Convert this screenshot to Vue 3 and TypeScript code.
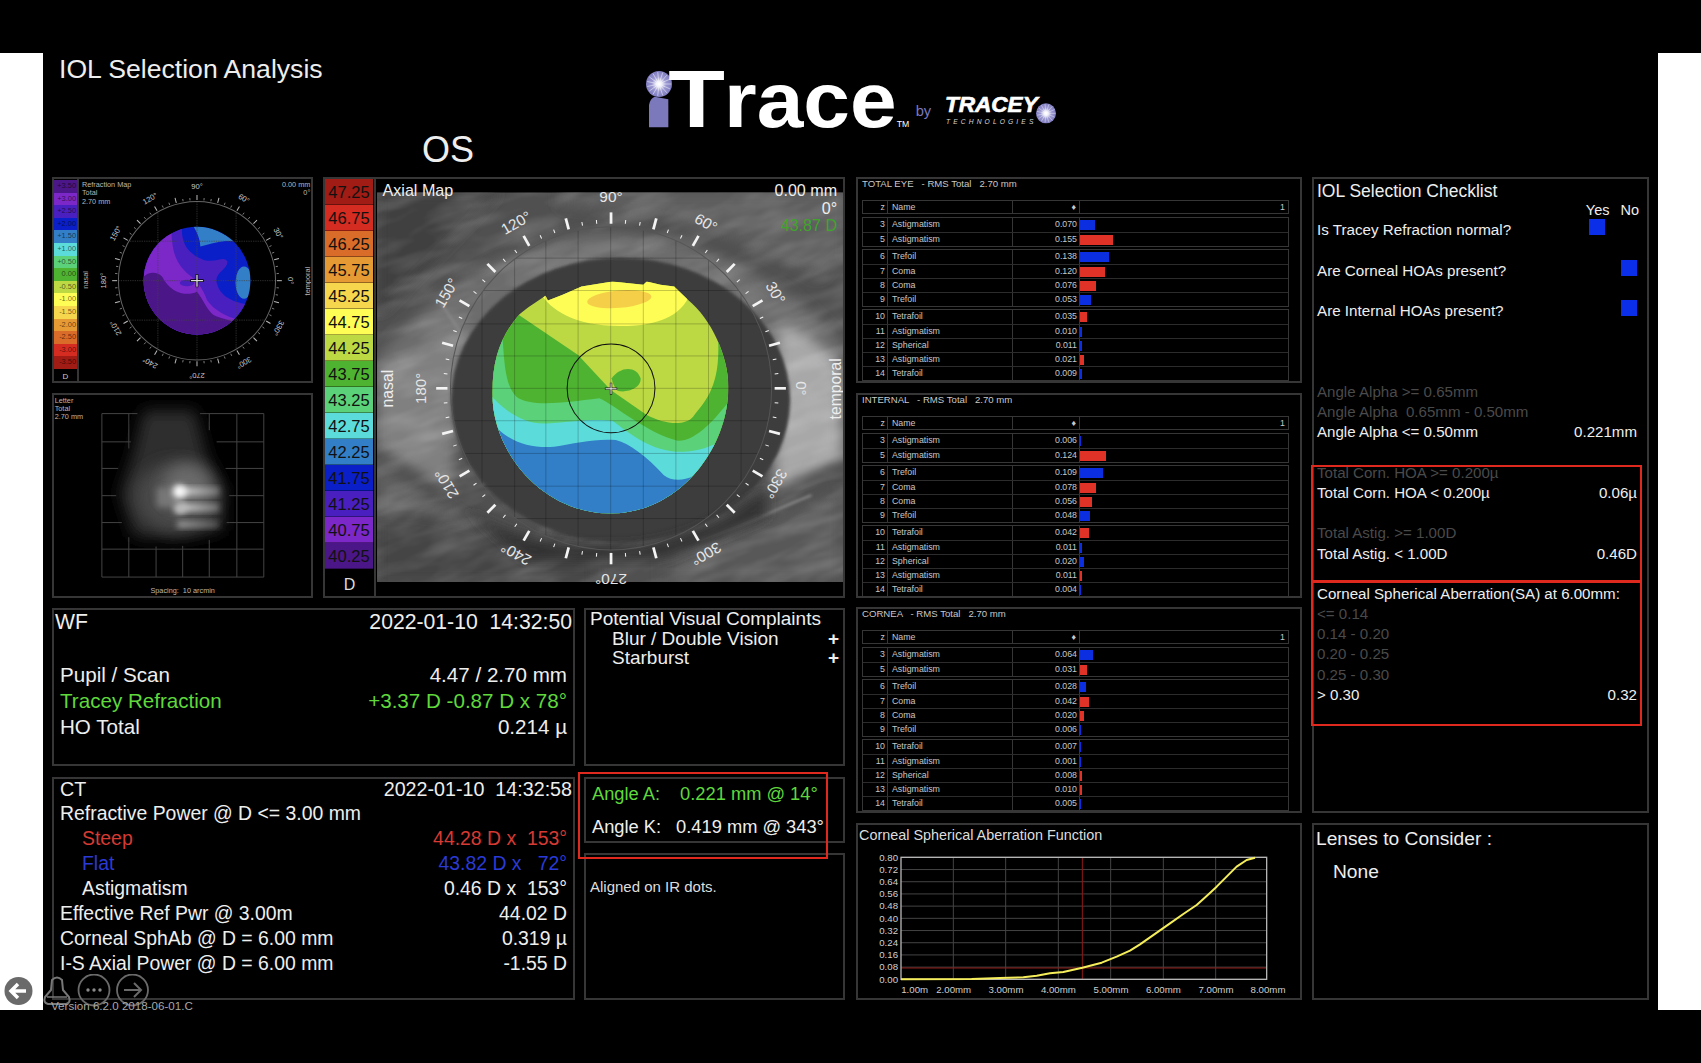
<script setup lang="ts">
interface Term {
  z: number
  name: string
  value: string
  color: 'blue' | 'red'
}

interface AberrationTable {
  title: string
  groups: Term[][]
}

const toTerms = (rows: [number, string, string, 'blue' | 'red'][]): Term[] =>
  rows.map(([z, name, value, color]) => ({ z, name, value, color }))

const buildGroups = (values: [string, 'blue' | 'red'][]): Term[][] => {
  const names: [number, string][] = [
    [3, 'Astigmatism'], [5, 'Astigmatism'], [6, 'Trefoil'], [7, 'Coma'], [8, 'Coma'], [9, 'Trefoil'],
    [10, 'Tetrafoil'], [11, 'Astigmatism'], [12, 'Spherical'], [13, 'Astigmatism'], [14, 'Tetrafoil'],
  ]
  const rows = toTerms(names.map(([z, name], i) => [z, name, values[i][0], values[i][1]]))
  return [rows.slice(0, 2), rows.slice(2, 6), rows.slice(6)]
}

const tables: AberrationTable[] = [
  {
    title: 'TOTAL EYE   - RMS Total   2.70 mm',
    groups: buildGroups([
      ['0.070', 'blue'], ['0.155', 'red'], ['0.138', 'blue'], ['0.120', 'red'], ['0.076', 'red'], ['0.053', 'blue'],
      ['0.035', 'red'], ['0.010', 'blue'], ['0.011', 'blue'], ['0.021', 'red'], ['0.009', 'blue'],
    ]),
  },
  {
    title: 'INTERNAL   - RMS Total   2.70 mm',
    groups: buildGroups([
      ['0.006', 'blue'], ['0.124', 'red'], ['0.109', 'blue'], ['0.078', 'red'], ['0.056', 'red'], ['0.048', 'blue'],
      ['0.042', 'red'], ['0.011', 'blue'], ['0.020', 'blue'], ['0.011', 'red'], ['0.004', 'blue'],
    ]),
  },
  {
    title: 'CORNEA   - RMS Total   2.70 mm',
    groups: buildGroups([
      ['0.064', 'blue'], ['0.031', 'red'], ['0.028', 'blue'], ['0.042', 'red'], ['0.020', 'red'], ['0.006', 'blue'],
      ['0.007', 'blue'], ['0.001', 'blue'], ['0.008', 'red'], ['0.010', 'red'], ['0.005', 'blue'],
    ]),
  },
]

const barWidth = (value: string) => `${Math.max(parseFloat(value) * 210, 1)}px`

const scale = ['#a01c14', '#d42c20', '#d96c28', '#e59a34', '#f6d64c', '#fdfd56', '#bcd944', '#4fb332',
  '#5bd27a', '#5cdbdb', '#327fc7', '#0a1fc8', '#4a1fc0', '#7c27c8', '#4b1687']

const axialLegend = ['47.25', '46.75', '46.25', '45.75', '45.25', '44.75', '44.25', '43.75',
  '43.25', '42.75', '42.25', '41.75', '41.25', '40.75', '40.25']
  .map((label, i) => ({ label, color: scale[i] }))

const refractionLegend = ['+3.50', '+3.00', '+2.50', '+2.00', '+1.50', '+1.00', '+0.50', '0.00',
  '-0.50', '-1.00', '-1.50', '-2.00', '-2.50', '-3.00', '-3.50']
  .map((label, i) => ({ label, color: scale[14 - i] }))

// ticks and degree labels round a polar map, xs squeezes x for the stretched views
const polar = (cx: number, cy: number, xs: number, major: [number, number], minor: [number, number], labelR: number) => {
  const pt = (deg: number, r: number) => {
    const rad = (deg * Math.PI) / 180
    return { x: cx + r * xs * Math.cos(rad), y: cy - r * Math.sin(rad) }
  }
  const ticks = []
  for (let a = 0; a < 360; a += 5) {
    const isMajor = a % 15 === 0
    const [r1, r2] = isMajor ? major : minor
    const p1 = pt(a, r1)
    const p2 = pt(a, r2)
    ticks.push({ a, isMajor, x1: p1.x, y1: p1.y, x2: p2.x, y2: p2.y })
  }
  const labels = []
  for (let a = 0; a < 360; a += 30) {
    const p = pt(a, labelR)
    labels.push({ a, x: p.x, y: p.y, rot: 90 - a })
  }
  return { ticks, labels }
}

const eyePolar = polar(846, 655, 0.967, [493, 527], [495, 506], 573)
const refrPolar = polar(590, 722, 1, [241, 256], [241, 248], 283)

const eyeGridX = [280, 375, 470, 565, 656, 750, 845, 940, 1035, 1130, 1225, 1320]
const eyeGridY = [170, 265, 362, 462, 558, 655, 752, 850, 948, 1045, 1140]

const psfLines = [
  'M305 100H412', 'M600 100H792', 'M305 185H392', 'M650 185H792', 'M305 265H354', 'M677 265H792',
  'M305 347H348', 'M688 347H792', 'M305 428H365', 'M680 428H792', 'M305 508H792', 'M305 592H792',
  'M305 100V592', 'M792 100V592', 'M386 100V205', 'M386 472V592', 'M468 500V592', 'M548 498V592',
  'M628 100V150', 'M628 480V592', 'M711 100V592',
]

const chartGridX = [310, 467, 625, 782, 940, 1097]
const chartY = ['0.80', '0.72', '0.64', '0.56', '0.48', '0.40', '0.32', '0.24', '0.16', '0.08', '0.00']
  .map((label, i) => ({ label, y: 142 + i * 36.6 }))
const chartX = [
  { label: '1.00m', x: 194 }, { label: '2.00mm', x: 311 }, { label: '3.00mm', x: 468 }, { label: '4.00mm', x: 625 },
  { label: '5.00mm', x: 783 }, { label: '6.00mm', x: 940 }, { label: '7.00mm', x: 1098 }, { label: '8.00mm', x: 1254 },
]
const curve = '153,508 365,507 450,504 520,502 560,497 600,490 640,486 697,473 755,458 800,440 840,422 870,403 900,382 960,340 1000,312 1040,285 1070,258 1100,230 1130,200 1160,170 1190,150 1215,143'

const rays = (cx: number, cy: number, r: number) => {
  const out = []
  for (let a = 0; a < 360; a += 24) {
    const rad = (a * Math.PI) / 180
    out.push({ x: cx + r * Math.cos(rad), y: cy + r * Math.sin(rad) })
  }
  return out
}
const bigSun = rays(117, 102, 36)
const smallSun = rays(1278, 190, 28)

const wfDate = '2022-01-10  14:32:50'
const ctDate = '2022-01-10  14:32:58'

const wfRows = [
  { label: 'Pupil / Scan', value: '4.47 / 2.70 mm', cls: '' },
  { label: 'Tracey Refraction', value: '+3.37 D -0.87 D x 78°', cls: 'green' },
  { label: 'HO Total', value: '0.214 µ', cls: '' },
]

const ctRows = [
  { label: 'Refractive Power @ D <= 3.00 mm', value: '', cls: '' },
  { label: 'Steep', value: '44.28 D x  153°', cls: 'red indent' },
  { label: 'Flat', value: '43.82 D x   72°', cls: 'blue indent' },
  { label: 'Astigmatism', value: '0.46 D x  153°', cls: 'indent' },
  { label: 'Effective Ref Pwr @ 3.00m', value: '44.02 D', cls: '' },
  { label: 'Corneal SphAb @ D = 6.00 mm', value: '0.319 µ', cls: '' },
  { label: 'I-S Axial Power @ D = 6.00 mm', value: '-1.55 D', cls: '' },
]

const checks = [
  { label: 'Is Tracey Refraction normal?', yes: true },
  { label: 'Are Corneal HOAs present?', yes: false },
  { label: 'Are Internal HOAs present?', yes: false },
]

const criteria = [
  { text: 'Angle Alpha >= 0.65mm', value: '', dim: true },
  { text: 'Angle Alpha  0.65mm - 0.50mm', value: '', dim: true },
  { text: 'Angle Alpha <= 0.50mm', value: '0.221mm', dim: false },
  { text: '', value: '', dim: false },
  { text: 'Total Corn. HOA >= 0.200µ', value: '', dim: true },
  { text: 'Total Corn. HOA < 0.200µ', value: '0.06µ', dim: false },
  { text: '', value: '', dim: false },
  { text: 'Total Astig. >= 1.00D', value: '', dim: true },
  { text: 'Total Astig. < 1.00D', value: '0.46D', dim: false },
  { text: '', value: '', dim: false },
  { text: 'Corneal Spherical Aberration(SA) at 6.00mm:', value: '', dim: false },
  { text: '<= 0.14', value: '', dim: true },
  { text: '0.14 - 0.20', value: '', dim: true },
  { text: '0.20 - 0.25', value: '', dim: true },
  { text: '0.25 - 0.30', value: '', dim: true },
  { text: '> 0.30', value: '0.32', dim: false },
]
</script>

<template>
  <div class="page">
    <div class="stage">
      <div class="side"></div>
      <main class="screen">
        <header class="top">
          <div class="heading">
            <h1 class="title">IOL Selection Analysis</h1>
            <div class="eye-side">OS</div>
          </div>
          <!-- iTrace / Tracey logo -->
          <svg class="logo" viewBox="0 0 1380 330">
            <defs>
              <radialGradient id="sun">
                <stop offset="0" stop-color="#fff" />
                <stop offset="0.22" stop-color="#e8e8f8" />
                <stop offset="0.55" stop-color="#9a97d0" />
                <stop offset="1" stop-color="#7f7cc0" />
              </radialGradient>
            </defs>
            <path d="M87 232V165Q90 146 104 140L145 148V232Z" fill="#7b78bb" />
            <circle cx="117" cy="102" r="39" fill="url(#sun)" />
            <line v-for="(r, i) in bigSun" :key="i" x1="117" y1="102" :x2="r.x" :y2="r.y" stroke="#fff" stroke-width="1.5" />
            <text class="logo-word" x="145" y="232" font-size="243" textLength="170" lengthAdjust="spacingAndGlyphs">T</text>
            <text class="logo-word" x="312" y="232" font-size="231" textLength="518" lengthAdjust="spacingAndGlyphs">race</text>
            <text class="logo-small" x="830" y="232" font-size="26" fill="#fff">TM</text>
            <text class="logo-small" x="887" y="197" font-size="44" fill="#7b78bb">by</text>
            <text class="logo-tracey" x="975" y="186" font-size="64" textLength="278" lengthAdjust="spacingAndGlyphs">TRACEY</text>
            <text class="logo-tech" x="978" y="222" font-size="20" textLength="262" lengthAdjust="spacing">TECHNOLOGIES</text>
            <circle cx="1278" cy="190" r="30" fill="url(#sun)" />
            <line v-for="(r, i) in smallSun" :key="'s' + i" x1="1278" y1="190" :x2="r.x" :y2="r.y" stroke="#fff" stroke-width="1.2" />
          </svg>
        </header>

        <div class="board">
          <div class="left-block">
            <div class="maps">
              <div class="small-col">
                <section class="panel refr">
                  <div class="mini-legend">
                    <div v-for="c in refractionLegend" :key="c.label" class="mini-cell" :style="{ background: c.color }">{{ c.label }}</div>
                    <div class="mini-unit">D</div>
                  </div>
                  <svg class="fill-svg" viewBox="234 418 700 604" preserveAspectRatio="none">
                    <defs>
                      <clipPath id="refr-zone"><circle cx="590" cy="722" r="161" /></clipPath>
                      <clipPath id="refr-outer"><circle cx="590" cy="722" r="237" /></clipPath>
                    </defs>
                    <g clip-path="url(#refr-zone)">
                      <rect x="420" y="550" width="340" height="340" fill="#0a1fc8" />
                      <path d="M578 558C620 558 670 575 705 605C670 600 640 610 600 620C600 600 590 575 578 558Z" fill="#327fc7" />
                      <ellipse cx="732" cy="728" rx="26" ry="48" fill="#327fc7" />
                      <path d="M420 722V550H545C540 610 560 640 610 660C650 670 670 645 682 665C682 690 640 700 650 730C660 770 700 790 760 795V890H420Z" fill="#4a1fc0" />
                      <path d="M420 722V560H512C515 630 520 660 560 700C590 720 610 750 620 780C640 810 680 830 712 838V890H420Z" fill="#7c27c8" />
                      <ellipse cx="560" cy="729" rx="22" ry="10" fill="#4a1fc0" />
                      <path d="M420 722C440 690 470 695 485 710C510 760 560 770 590 755C610 780 620 810 640 825C660 835 690 840 705 848V890H420Z" fill="#4b1687" />
                    </g>
                    <g clip-path="url(#refr-outer)" stroke="#444" stroke-width="2" stroke-dasharray="4 3">
                      <path d="M353 604H827M353 722H827M353 840H827M472 485V959M590 485V959M708 485V959" />
                    </g>
                    <circle cx="590" cy="722" r="237" fill="none" stroke="#666" stroke-width="3" />
                    <line v-for="t in refrPolar.ticks" :key="t.a" :x1="t.x1" :y1="t.y1" :x2="t.x2" :y2="t.y2" stroke="#bbb" :stroke-width="t.isMajor ? 3 : 2" />
                    <text v-for="l in refrPolar.labels" :key="l.a" class="refr-label" :x="l.x" :y="l.y" :transform="`rotate(${l.rot} ${l.x} ${l.y})`">{{ l.a }}°</text>
                    <path d="M590 702V742M570 722H610" stroke="#000" stroke-width="8" />
                    <path d="M590 704V740M572 722H608" stroke="#ddd" stroke-width="4" />
                    <text class="refr-text" x="243" y="442">Refraction Map</text>
                    <text class="refr-text" x="243" y="467">Total</text>
                    <text class="refr-text" x="243" y="492">2.70 mm</text>
                    <text class="refr-text end" x="932" y="442">0.00 mm</text>
                    <text class="refr-text end" x="932" y="467">0°</text>
                    <text class="refr-text" transform="rotate(-90 262 746)" x="262" y="746">nasal</text>
                    <text class="refr-text" transform="rotate(-90 930 766)" x="930" y="766">temporal</text>
                  </svg>
                </section>
                <section class="panel psf">
                  <svg class="fill-svg" viewBox="161 44 773 605" preserveAspectRatio="none">
                    <defs>
                      <filter id="soft-a" x="-40%" y="-40%" width="180%" height="180%"><feGaussianBlur stdDeviation="22" /></filter>
                      <filter id="soft-b" x="-40%" y="-40%" width="180%" height="180%"><feGaussianBlur stdDeviation="9" /></filter>
                      <linearGradient id="streak">
                        <stop offset="0" stop-color="#e4e4e4" />
                        <stop offset="1" stop-color="#777" />
                      </linearGradient>
                    </defs>
                    <path v-for="l in psfLines" :key="l" :d="l" stroke="#444" stroke-width="3" fill="none" />
                    <path d="M430 90H585L620 230L670 320L670 450L540 475L400 470L360 340L400 220Z" fill="#2e2e2e" filter="url(#soft-a)" />
                    <ellipse cx="530" cy="350" rx="125" ry="105" fill="#4a4a4a" filter="url(#soft-a)" />
                    <ellipse cx="560" cy="320" rx="70" ry="70" fill="#6a6a6a" filter="url(#soft-a)" />
                    <rect x="532" y="322" width="125" height="24" fill="url(#streak)" filter="url(#soft-b)" />
                    <rect x="532" y="372" width="125" height="22" fill="url(#streak)" filter="url(#soft-b)" />
                    <rect x="532" y="424" width="125" height="20" fill="url(#streak)" opacity="0.6" filter="url(#soft-b)" />
                    <rect x="470" y="322" width="70" height="60" fill="#777" filter="url(#soft-b)" />
                    <ellipse cx="538" cy="335" rx="20" ry="20" fill="#fff" filter="url(#soft-b)" />
                    <ellipse cx="540" cy="385" rx="18" ry="18" fill="#bbb" filter="url(#soft-b)" />
                    <text class="refr-text" x="163" y="67">Letter</text>
                    <text class="refr-text" x="163" y="92">Total</text>
                    <text class="refr-text" x="163" y="117">2.70 mm</text>
                    <text class="refr-text mid" x="548" y="641">Spacing:&#160; 10 arcmin</text>
                  </svg>
                </section>
              </div>

              <section class="panel axial">
                <div class="axial-legend">
                  <div v-for="c in axialLegend" :key="c.label" class="axial-cell" :style="{ background: c.color }">{{ c.label }}</div>
                  <div class="axial-unit">D</div>
                </div>
                <svg class="fill-svg" viewBox="161 28 1361 1249" preserveAspectRatio="none">
                  <defs>
                    <filter id="skin" x="-10%" y="-10%" width="120%" height="120%"><feGaussianBlur stdDeviation="18" /></filter>
                    <filter id="skin-fine" x="-10%" y="-10%" width="120%" height="120%"><feGaussianBlur stdDeviation="4" /></filter>
                    <filter id="grain" x="0" y="0" width="100%" height="100%">
                      <feTurbulence type="fractalNoise" baseFrequency="0.006 0.024" numOctaves="3" seed="4" />
                      <feColorMatrix values="0 0 0 0 1  0 0 0 0 1  0 0 0 0 1  2 0 0 0 -0.75" />
                      <feGaussianBlur stdDeviation="3" />
                    </filter>
                    <clipPath id="eye-photo"><rect x="164" y="68" width="1358" height="1167" /></clipPath>
                    <clipPath id="zone-map">
                      <path d="M580 432L605 412L655 378L662 392L705 375L760 350L850 335L940 345L950 335L990 345L1030 350L1070 390C1140 450 1188 560 1188 650C1188 840 1040 1030 844 1030C650 1030 500 850 500 670C500 560 530 490 580 432Z" />
                    </clipPath>
                    <clipPath id="eye-circle"><ellipse cx="846" cy="655" rx="468" ry="484" /></clipPath>
                  </defs>
                  <g clip-path="url(#eye-photo)">
                    <rect x="164" y="68" width="1358" height="1167" fill="#505050" />
                    <g filter="url(#skin)">
                      <path d="M164 68H520L300 300L164 440Z" fill="#404040" />
                      <path d="M164 560C300 400 480 240 780 190C1050 170 1350 320 1522 520V600L164 700Z" fill="#6c6c6c" />
                      <path d="M700 110C900 120 1200 170 1450 330L1522 250V68H700Z" fill="#5e5e5e" />
                      <path d="M164 590C240 560 320 520 420 480L380 960L164 830Z" fill="#808080" />
                      <path d="M1340 470C1420 500 1522 560 1522 640V860L1320 950Z" fill="#a8a8a8" />
                      <path d="M164 880C300 980 420 1060 600 1120V1235H164Z" fill="#606060" />
                      <path d="M164 1040C300 1000 500 1100 800 1160V1235H164Z" fill="#454545" />
                      <path d="M1000 1140C1200 1100 1350 1010 1522 960V1235H1000Z" fill="#585858" />
                    </g>
                    <rect x="-200" y="-300" width="2100" height="1900" filter="url(#grain)" opacity="0.16" transform="rotate(-18 800 600)" />
                    <g filter="url(#skin-fine)" fill="none" stroke="#8c8c8c" stroke-width="5">
                      <path d="M1100 1110C1230 1070 1340 1010 1430 975" stroke="#a0a0a0" />
                      <path d="M350 400C370 430 390 460 410 490" />
                    </g>
                    <ellipse cx="874" cy="690" rx="494" ry="426" fill="#3e3e3e" filter="url(#skin-fine)" />
                    <path d="M380 980C540 1120 720 1135 900 1125C1050 1115 1200 1040 1300 950V1040L1000 1170L600 1170Z" fill="#333" filter="url(#skin)" />
                  </g>
                  <!-- height map, painted back to front -->
                  <g clip-path="url(#zone-map)">
                    <rect x="490" y="325" width="710" height="715" fill="#bcd944" />
                    <path d="M640 370C670 420 740 470 880 468C960 468 1040 450 1072 382L1060 330H640Z" fill="#fdfd56" />
                    <ellipse cx="870" cy="388" rx="94" ry="26" transform="rotate(-5 870 388)" fill="#f6cf48" />
                    <path d="M570 430L750 555L845 660L950 735C1000 762 1060 770 1085 740C1120 695 1165 650 1158 510L1205 510V1040H490V430Z" fill="#4fb332" />
                    <path d="M490 500L530 505C535 590 540 650 570 680C610 710 700 700 812 685C850 700 950 790 1040 812C1100 816 1170 720 1200 680V1040H490Z" fill="#5bd27a" />
                    <path d="M490 670C540 730 600 765 660 760C730 755 800 745 850 752C900 790 970 850 1060 845C1100 842 1140 830 1165 812L1200 1040H490Z" fill="#5cdbdb" />
                    <path d="M490 745L515 775C560 820 620 835 680 830C740 820 800 805 860 810C900 820 950 860 1000 915C1030 940 1090 930 1122 890L1200 1040H490Z" fill="#327fc7" />
                    <path d="M848 625C870 590 920 585 932 625C935 655 890 670 865 662C855 650 850 640 848 625Z" fill="#4fb332" />
                  </g>
                  <g clip-path="url(#eye-circle)" stroke="#000" stroke-opacity="0.32" stroke-width="2">
                    <line v-for="x in eyeGridX" :key="'gx' + x" :x1="x" y1="160" :x2="x" y2="1150" />
                    <line v-for="y in eyeGridY" :key="'gy' + y" x1="370" :y1="y" x2="1320" :y2="y" />
                  </g>
                  <ellipse cx="846" cy="655" rx="468" ry="484" fill="none" stroke="#555" stroke-width="3" />
                  <ellipse cx="846" cy="655" rx="128" ry="133" fill="none" stroke="#111" stroke-width="3" />
                  <line v-for="t in eyePolar.ticks" :key="t.a" :x1="t.x1" :y1="t.y1" :x2="t.x2" :y2="t.y2" stroke="#f4f4f4" :stroke-width="t.isMajor ? 8 : 3" />
                  <path d="M846 638V674M828 656H864" stroke="#222" stroke-width="7" />
                  <path d="M846 640V672M830 656H862" stroke="#e8e8e8" stroke-width="3" />
                  <text v-for="l in eyePolar.labels" :key="l.a" class="eye-label" :x="l.x" :y="l.y" :transform="`rotate(${l.rot} ${l.x} ${l.y})`">{{ l.a }}°</text>
                  <text class="eye-text" x="180" y="79">Axial Map</text>
                  <text class="eye-text end" x="1505" y="79">0.00 mm</text>
                  <text class="eye-text end" x="1505" y="132">0°</text>
                  <text class="eye-text end dim-green" x="1505" y="184">43.87 D</text>
                  <text class="eye-text" transform="rotate(-90 210 712)" x="210" y="712">nasal</text>
                  <text class="eye-text" transform="rotate(-90 1515 748)" x="1515" y="748">temporal</text>
                </svg>
              </section>
            </div>

            <div class="readouts">
              <div class="readout-col">
                <section class="panel wf">
                  <div class="wf-head"><span class="wf-name">WF</span><span>{{ wfDate }}</span></div>
                  <div class="wf-rows">
                    <div v-for="r in wfRows" :key="r.label" class="row" :class="r.cls">
                      <span>{{ r.label }}</span><span>{{ r.value }}</span>
                    </div>
                  </div>
                </section>
                <section class="panel ct">
                  <div class="ct-head"><span class="ct-name">CT</span><span>{{ ctDate }}</span></div>
                  <div v-for="r in ctRows" :key="r.label" class="ct-row row" :class="r.cls">
                    <span class="ct-label">{{ r.label }}</span><span>{{ r.value }}</span>
                  </div>
                </section>
              </div>
              <div class="mid-col">
                <section class="panel complaints">
                  <div class="complaints-title">Potential Visual Complaints</div>
                  <div class="complaint"><span>Blur / Double Vision</span><span class="plus">+</span></div>
                  <div class="complaint"><span>Starburst</span><span class="plus">+</span></div>
                </section>
                <section class="panel angles">
                  <div class="angle green"><span class="angle-name">Angle A:</span><span class="angle-a">0.221 mm @ 14°</span></div>
                  <div class="angle"><span class="angle-name">Angle K:</span><span class="angle-k">0.419 mm @ 343°</span></div>
                </section>
                <section class="panel aligned">Aligned on IR dots.</section>
                <div class="red-box angle-box"></div>
              </div>
            </div>
          </div>

          <div class="aberr-col">
            <section v-for="t in tables" :key="t.title" class="panel aberr">
              <div class="aberr-title">{{ t.title }}</div>
              <div class="term-head term-row">
                <span class="c-z">z</span><span class="c-name">Name</span><span class="c-val diamond">♦</span><span class="c-bar head-one">1</span>
              </div>
              <div v-for="(g, gi) in t.groups" :key="gi" class="term-group">
                <div v-for="row in g" :key="row.z" class="term-row">
                  <span class="c-z">{{ row.z }}</span>
                  <span class="c-name">{{ row.name }}</span>
                  <span class="c-val">{{ row.value }}</span>
                  <span class="c-bar"><i class="bar" :class="row.color" :style="{ width: barWidth(row.value) }"></i></span>
                </div>
              </div>
            </section>
            <section class="panel sa-chart">
              <div class="sa-title">Corneal Spherical Aberration Function</div>
              <svg class="sa-svg" viewBox="24 105 1326 459" preserveAspectRatio="none">
                <line v-for="y in chartY" :key="y.label" x1="153" :y1="y.y" x2="1250" :y2="y.y" stroke="#444" stroke-width="3" />
                <line v-for="x in chartGridX" :key="x" :x1="x" y1="142" :x2="x" y2="508" stroke="#444" stroke-width="3" />
                <line x1="697" y1="142" x2="697" y2="508" stroke="#8e1a16" stroke-width="3" />
                <line x1="153" y1="474" x2="1250" y2="474" stroke="#8e1a16" stroke-width="3" />
                <rect x="153" y="142" width="1097" height="366" fill="none" stroke="#b5b5b5" stroke-width="4" />
                <polyline :points="curve" fill="none" stroke="#f5ee5a" stroke-width="6" stroke-linejoin="round" />
                <text v-for="y in chartY" :key="'l' + y.label" class="chart-text end" x="144" :y="y.y + 10">{{ y.label }}</text>
                <text v-for="x in chartX" :key="x.label" class="chart-text mid" :x="x.x" y="550">{{ x.label }}</text>
              </svg>
            </section>
          </div>

          <div class="right-col">
            <section class="panel checklist">
              <div class="check-title">IOL Selection Checklist</div>
              <div class="yes-no"><span>Yes</span><span>No</span></div>
              <div v-for="c in checks" :key="c.label" class="check-row">
                <span class="check-label">{{ c.label }}</span>
                <span class="mark"><i v-if="c.yes" class="square"></i></span>
                <span class="mark"><i v-if="!c.yes" class="square"></i></span>
              </div>
              <div class="criteria">
                <div v-for="(c, i) in criteria" :key="i" class="criterion" :class="{ dim: c.dim }">
                  <span>{{ c.text }}</span><span>{{ c.value }}</span>
                </div>
              </div>
              <div class="red-box hoa-box"></div>
              <div class="red-box sa-box"></div>
            </section>
            <section class="panel lenses">
              <div>Lenses to Consider :</div>
              <div class="lens-none">None</div>
            </section>
          </div>
        </div>
      </main>
      <div class="side"></div>
    </div>

    <!-- floating tablet controls -->
    <svg class="controls" width="152" height="36" viewBox="0 0 152 36">
      <circle cx="18.5" cy="17" r="14" fill="#6a6a6a" />
      <path d="M26 17H12M18 10L11 17L18 24" fill="none" stroke="#fff" stroke-width="3.5" />
      <path d="M51 16L52 6Q57 1 62 6L63 16L69 23Q71 29 66 30H48Q43 29 45 23Z" fill="none" stroke="#777" stroke-width="2" />
      <path d="M47 23H67" stroke="#777" stroke-width="1.5" />
      <circle cx="94" cy="16" r="15.5" fill="none" stroke="#6a6a6a" stroke-width="1.8" />
      <circle cx="88" cy="16" r="1.7" fill="#8a8a8a" />
      <circle cx="94" cy="16" r="1.7" fill="#8a8a8a" />
      <circle cx="100" cy="16" r="1.7" fill="#8a8a8a" />
      <circle cx="132.5" cy="16" r="15.5" fill="none" stroke="#6a6a6a" stroke-width="1.8" />
      <path d="M124 16H140M134 9L141 16L134 23" fill="none" stroke="#6a6a6a" stroke-width="2" />
    </svg>
    <div class="version">Version 6.2.0 2018-06-01.C</div>
  </div>
</template>

<style>
html,
body {
  margin: 0;
  background: #000;
}
</style>

<style scoped>
.page {
  position: relative;
  width: 1701px;
  height: 1063px;
  padding-top: 53px;
  box-sizing: border-box;
  background: #000;
  color: #eee;
  font-family: 'Liberation Sans', Arial, sans-serif;
  overflow: hidden;
}

.stage {
  display: flex;
  height: 957px;
}

.side {
  width: 43px;
  background: #fff;
}

.screen {
  width: 1615px;
  background: #000;
  padding-left: 9px;
  box-sizing: border-box;
}

/* Header */
.top {
  display: flex;
  height: 124px;
}

.heading {
  width: 588px;
}

.title {
  margin: 0;
  padding: 1px 0 0 7px;
  font-size: 26.6px;
  font-weight: 400;
  line-height: 30px;
}

.eye-side {
  margin: 46px 0 0 370px;
  font-size: 36px;
  line-height: 40px;
}

.logo {
  width: 460px;
  height: 110px;
  margin-top: -3px;
  margin-left: -20px;
}

.logo-word {
  font-weight: 700;
  fill: #fff;
  font-family: 'Liberation Sans', Arial, sans-serif;
}

.logo-small {
  font-family: 'Liberation Sans', Arial, sans-serif;
}

.logo-tracey {
  font-weight: 700;
  font-style: italic;
  fill: #fff;
  stroke: #fff;
  stroke-width: 2px;
  font-family: 'Liberation Sans', Arial, sans-serif;
}

.logo-tech {
  font-style: italic;
  fill: #d8d8d8;
  font-family: 'Liberation Sans', Arial, sans-serif;
}

/* Board */
.board {
  display: flex;
  height: 823px;
}

.left-block {
  width: 793px;
  margin-right: 11px;
}

.panel {
  border: 2px solid #363636;
  box-sizing: border-box;
  background: #000;
}

.fill-svg {
  display: block;
  flex: 1;
  min-width: 0;
  width: 100%;
  height: 100%;
}

.maps {
  display: flex;
  gap: 10px;
  height: 421px;
}

.small-col {
  display: flex;
  flex-direction: column;
  gap: 10px;
  width: 261px;
}

.refr {
  display: flex;
  height: 206px;
}

.psf {
  height: 205px;
}

.mini-legend {
  width: 23px;
  padding-top: 1px;
  border-right: 2px solid #363636;
}

.mini-cell {
  height: 12.6px;
  font-size: 7.4px;
  line-height: 12.6px;
  text-align: right;
  padding-right: 1px;
  color: rgba(0, 0, 0, 0.6);
}

.mini-unit {
  font-size: 8px;
  line-height: 15px;
  text-align: center;
  color: #ccc;
}

.refr-label {
  font-size: 23px;
  fill: #c8c8c8;
  text-anchor: middle;
  dominant-baseline: central;
}

.refr-text {
  font-size: 22px;
  fill: #b8b8b8;
}

.end {
  text-anchor: end;
}

.mid {
  text-anchor: middle;
}

.axial {
  display: flex;
  width: 522px;
}

.axial-legend {
  width: 49px;
  flex: none;
  border-right: 2px solid #363636;
}

.axial-cell {
  height: 26px;
  margin-right: 1px;
  font-size: 16.5px;
  line-height: 26px;
  text-align: center;
  color: #111;
  border-bottom: 1px solid rgba(0, 0, 0, 0.35);
  box-sizing: border-box;
}

.axial-unit {
  font-size: 16px;
  line-height: 32px;
  text-align: center;
  color: #ddd;
}

.eye-label {
  font-size: 45px;
  fill: #e6e6e6;
  text-anchor: middle;
  dominant-baseline: central;
}

.eye-text {
  font-size: 47px;
  fill: #eee;
}

.dim-green {
  fill: #3fa52c;
}

/* Lower readouts */
.readouts {
  display: flex;
  gap: 9px;
  height: 392px;
  margin-top: 10px;
}

.readout-col {
  display: flex;
  flex-direction: column;
  gap: 11px;
  width: 523px;
}

.wf {
  height: 158px;
}

.wf-head {
  display: flex;
  justify-content: space-between;
  height: 24px;
  padding: 0 1px 0 1px;
  font-size: 21.2px;
  line-height: 24px;
  white-space: pre;
}

.wf-rows {
  margin-top: 28px;
  padding: 0 6px;
  font-size: 20.6px;
  line-height: 26px;
}

.row {
  display: flex;
  justify-content: space-between;
  white-space: pre;
}

.green {
  color: #5fd83c;
}

.red {
  color: #d63a33;
}

.blue {
  color: #2a3ad6;
}

.ct {
  height: 223px;
}

.ct-head {
  display: flex;
  justify-content: space-between;
  height: 22px;
  padding: 0 1px 0 6px;
  font-size: 19.7px;
  line-height: 20px;
  white-space: pre;
}

.ct-row {
  height: 25px;
  padding: 0 6px;
  font-size: 19.4px;
  line-height: 25px;
}

.indent .ct-label {
  padding-left: 22px;
}

.mid-col {
  position: relative;
  display: flex;
  flex-direction: column;
  width: 261px;
}

.complaints {
  height: 158px;
  font-size: 19px;
  line-height: 19.7px;
  padding: 0 2px 0 4px;
}

.complaints-title {
  margin-top: -1px;
}

.complaint {
  display: flex;
  justify-content: space-between;
  padding-left: 22px;
}

.plus {
  padding-right: 2px;
  font-weight: 700;
}

.angles {
  height: 66px;
  margin-top: 11px;
  padding: 2px 0 0 6px;
  font-size: 18.3px;
}

.angle {
  display: flex;
  height: 33px;
  line-height: 26px;
  white-space: pre;
}

.angle-a {
  margin-left: 20px;
}

.angle-k {
  margin-left: 15px;
}

.aligned {
  height: 147px;
  margin-top: 10px;
  padding: 23px 4px 0;
  font-size: 15px;
  line-height: 18px;
  color: #ddd;
}

.red-box {
  position: absolute;
  border: 2px solid #e0291e;
  box-sizing: border-box;
  pointer-events: none;
}

.angle-box {
  left: -6px;
  top: 164px;
  width: 250px;
  height: 87px;
}

/* Aberration tables */
.aberr-col {
  display: flex;
  flex-direction: column;
  gap: 10px;
  width: 446px;
  margin-right: 10px;
}

.aberr {
  height: 206px;
  padding: 0 11px 0 4px;
  color: #c8c8c8;
  font-size: 8.8px;
}

.aberr:nth-child(2) {
  height: 205px;
  margin-bottom: -1px;
}

.aberr-title {
  height: 21px;
  font-size: 9.6px;
  line-height: 10px;
  white-space: pre;
}

.term-group,
.term-head {
  border: 1px solid #363636;
  box-sizing: border-box;
}

.term-head {
  height: 15px;
  margin-bottom: 3px;
}

.term-group + .term-group {
  margin-top: 2px;
}

.term-row {
  display: flex;
  height: 14px;
  line-height: 13px;
  box-sizing: border-box;
}

.term-group .term-row + .term-row {
  border-top: 1px solid #2c2c2c;
}

.c-z {
  width: 25px;
  padding-right: 2px;
  box-sizing: border-box;
  text-align: right;
  border-right: 1px solid #363636;
}

.c-name {
  width: 125px;
  padding-left: 4px;
  box-sizing: border-box;
  border-right: 1px solid #363636;
}

.c-val {
  width: 67px;
  padding-right: 2px;
  box-sizing: border-box;
  text-align: right;
  border-right: 1px solid #363636;
}

.diamond {
  padding-right: 3px;
}

.c-bar {
  flex: 1;
  display: flex;
  align-items: center;
}

.head-one {
  justify-content: flex-end;
  padding-right: 3px;
}

.bar {
  display: block;
  height: 10px;
}

.bar.blue {
  background: #0b2ee0;
}

.bar.red {
  background: #e03226;
}

.sa-chart {
  height: 177px;
}

.sa-title {
  height: 20px;
  padding-left: 1px;
  font-size: 14.4px;
  line-height: 20px;
  color: #ddd;
}

.sa-svg {
  display: block;
  width: 100%;
  height: 153px;
}

.chart-text {
  font-size: 29px;
  fill: #cfcfcf;
}

/* Checklist */
.right-col {
  display: flex;
  flex-direction: column;
  gap: 10px;
  width: 337px;
}

.checklist {
  position: relative;
  height: 636px;
  padding: 0 10px 0 3px;
  font-size: 15.2px;
}

.check-title {
  height: 24px;
  font-size: 17.5px;
  line-height: 24px;
}

.yes-no {
  display: flex;
  justify-content: flex-end;
  gap: 11px;
  height: 14px;
  margin-right: -2px;
  line-height: 14px;
  font-size: 14.5px;
}

.check-row {
  display: flex;
  height: 26px;
  margin-right: -8px;
  margin-bottom: 14.5px;
  line-height: 26px;
}

.check-label {
  flex: 1;
}

.mark {
  width: 32px;
  display: flex;
  justify-content: center;
}

.square {
  display: block;
  width: 16px;
  height: 16px;
  margin-top: 2px;
  background: #0b2ee8;
}

.criteria {
  margin-top: 58px;
  font-size: 15.1px;
}

.criterion {
  display: flex;
  justify-content: space-between;
  height: 20.2px;
  line-height: 20.2px;
  white-space: pre;
}

.criterion.dim {
  color: #4a4a4a;
}

.hoa-box {
  left: -3px;
  top: 286px;
  width: 331px;
  height: 117px;
}

.sa-box {
  left: -3px;
  top: 402px;
  width: 331px;
  height: 145px;
}

.lenses {
  height: 177px;
  padding: 2px 2px;
  font-size: 19.2px;
  line-height: 24px;
}

.lens-none {
  margin-top: 9px;
  padding-left: 17px;
}

/* Overlays */
.controls {
  position: absolute;
  left: 0;
  top: 974px;
}

.version {
  position: absolute;
  left: 51px;
  top: 999px;
  font-size: 11.6px;
  line-height: 14px;
  color: #a8a8a8;
}
</style>
